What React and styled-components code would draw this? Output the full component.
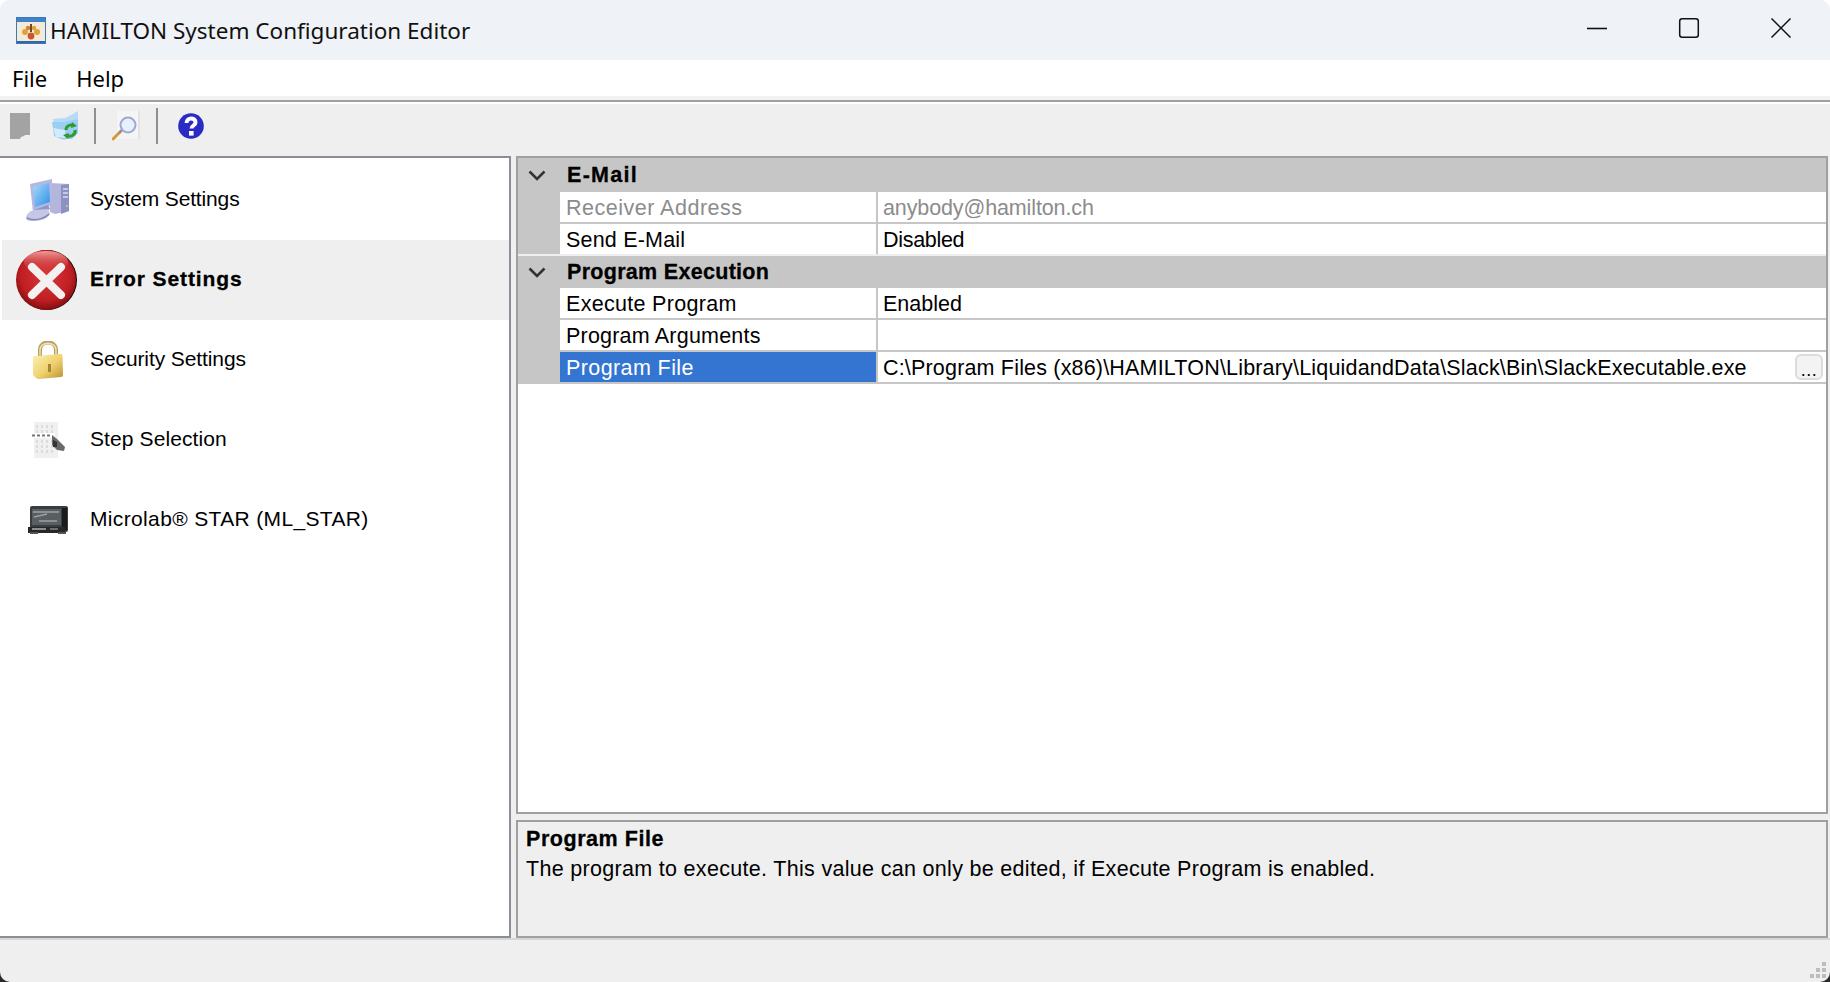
import React from "react";
import styled, { createGlobalStyle } from "styled-components";

const GlobalStyle = createGlobalStyle`
  html, body {
    margin: 0;
    height: 100%;
    overflow: hidden;
    background: linear-gradient(#ffffff 0, #ffffff 50%, #2a2a2a 50%, #2a2a2a 100%);
  }
  #root { height: 100%; }
`;

const Window = styled.div`
  width: 1830px;
  height: 982px;
  display: flex;
  flex-direction: column;
  background: #efefef;
  border-radius: 10px;
  overflow: hidden;
  font-family: "Liberation Sans", Arial, sans-serif;
  color: #000;
`;

const TitleBar = styled.div`
  height: 60px;
  flex-shrink: 0;
  display: flex;
  align-items: center;
  background: #eff3f8;
  padding: 0 3px 0 16px;
  font-family: "Noto Sans", sans-serif;
  font-size: 22.5px;
  color: #111;
`;

const TitleText = styled.span`
  margin-left: 4px;
  flex: 1;
`;

const WinButton = styled.div`
  width: 92px;
  height: 56px;
  padding-bottom: 4px;
  display: flex;
  align-items: center;
  justify-content: center;
`;

const MenuBar = styled.div`
  height: 36px;
  flex-shrink: 0;
  display: flex;
  align-items: center;
  gap: 29px;
  padding-left: 12px;
  background: #fff;
  font-family: "Noto Sans", sans-serif;
  font-size: 22px;
`;

const MenuRule = styled.div`
  height: 2px;
  flex-shrink: 0;
  margin-top: 4px;
  background: #a0a0a0;
  box-shadow: 0 -4px 0 #f2f2f2;
  border-bottom: 2px solid #fff;
  box-sizing: content-box;
`;

const Toolbar = styled.div`
  height: 44px;
  padding-bottom: 8px;
  flex-shrink: 0;
  display: flex;
  align-items: center;
`;

const ToolSlot = styled.div`
  width: ${(p) => p.$w}px;
  height: 100%;
  display: flex;
  align-items: center;
  justify-content: center;
`;

const ToolSep = styled.div`
  width: 2px;
  height: 36px;
  background: #8f8f8f;
  margin-left: ${(p) => p.$gap || 0}px;
`;

const Main = styled.div`
  flex: 1;
  min-height: 0;
  display: flex;
  gap: 5px;
  padding-right: 2px;
`;

const SidePanel = styled.div`
  width: 511px;
  box-sizing: border-box;
  flex-shrink: 0;
  background: #fff;
  border-top: 2px solid #8a8f96;
  border-right: 2px solid #8a8f96;
  border-bottom: 2px solid #8a8f96;
  padding: 2px 0 0 2px;
`;

const NavItem = styled.div`
  height: 80px;
  display: flex;
  align-items: center;
  background: ${(p) => (p.$active ? "#efefef" : "transparent")};
  font-size: 21px;
  font-weight: ${(p) => (p.$active ? 700 : 400)};
  letter-spacing: ${(p) => p.$track}px;
  -webkit-text-stroke: ${(p) => (p.$active ? "0.3px #000" : "0")};
`;

const NavLabel = styled.span`
  margin-top: -2px;
`;

const NavIcon = styled.div`
  width: 84px;
  margin-left: ${(p) => (p.$shift ? 3 : 4)}px;
  margin-right: ${(p) => (p.$shift ? 1 : 0)}px;
  height: 100%;
  display: flex;
  align-items: center;
  justify-content: center;
`;

const RightColumn = styled.div`
  flex: 1;
  min-width: 0;
  display: flex;
  flex-direction: column;
  gap: 6px;
`;

const Grid = styled.div`
  flex: 1;
  min-height: 0;
  background: #fff;
  border: 2px solid #a0a0a0;
  font-size: 21.5px;
`;

const GroupHeader = styled.div`
  height: ${(p) => p.$h}px;
  display: flex;
  align-items: center;
  background: #c6c6c6;
  font-weight: 700;
  -webkit-text-stroke: 0.3px #000;
  border-top: ${(p) => (p.$sep ? "2px solid #efefef" : "none")};
  box-sizing: content-box;
`;

const Chevron = styled.div`
  width: 42px;
  display: flex;
  justify-content: center;
  padding-right: 5px;
  box-sizing: border-box;
`;

const GroupName = styled.span`
  margin-left: 7px;
  letter-spacing: ${(p) => p.$track}px;
`;

const Row = styled.div`
  height: 30px;
  display: flex;
  background: #c6c6c6;
  padding-bottom: ${(p) => (p.$last ? 0 : 2)}px;
  box-sizing: content-box;
`;

const Gutter = styled.div`
  width: 42px;
  flex-shrink: 0;
`;

const NameCell = styled.div`
  width: 316px;
  flex-shrink: 0;
  display: flex;
  align-items: center;
  padding: 2px 0 0 6px;
  box-sizing: border-box;
  letter-spacing: ${(p) => p.$track}px;
  background: ${(p) => (p.$selected ? "#3375d0" : "#fff")};
  color: ${(p) => (p.$selected ? "#fff" : p.$disabled ? "#8c8c8c" : "#000")};
`;

const ValueCell = styled.div`
  flex: 1;
  min-width: 0;
  margin-left: 2px;
  display: flex;
  align-items: center;
  padding: 2px 0 0 5px;
  box-sizing: border-box;
  background: #fff;
  white-space: nowrap;
  letter-spacing: ${(p) => p.$track || 0}px;
  color: ${(p) => (p.$disabled ? "#8c8c8c" : "#000")};
`;

const EllipsisButton = styled.div`
  width: 28px;
  height: 26px;
  margin: -2px 3px 0 auto;
  box-sizing: border-box;
  border: 2px solid #dcdcdc;
  border-radius: 6px;
  background: #f3f3f3;
  font-size: 18px;
  line-height: 28px;
  text-align: center;
  letter-spacing: 0.5px;
`;

const HelpPanel = styled.div`
  height: 118px;
  flex-shrink: 0;
  box-sizing: border-box;
  border: 2px solid #a0a0a0;
  padding: 2px 8px;
  font-size: 21.5px;
`;

const HelpTitle = styled.div`
  font-weight: 700;
  -webkit-text-stroke: 0.3px #000;
  line-height: 30px;
  letter-spacing: 0.55px;
`;

const HelpText = styled.div`
  line-height: 30px;
  letter-spacing: 0.31px;
`;

const StatusBar = styled.div`
  height: 38px;
  flex-shrink: 0;
  border-top: 2px solid #d6d6d6;
  display: flex;
  justify-content: flex-end;
  align-items: flex-end;
  padding: 0 4px 4px 0;
`;

const AppIcon = () => (
  <svg width="30" height="27" viewBox="0 0 30 27">
    <rect x="0.5" y="0.5" width="29" height="26" fill="#f3ead8" stroke="#3f78b8" />
    <rect x="1" y="1" width="28" height="4" fill="#3f82c8" />
    <rect x="1" y="24" width="28" height="2" fill="#2f68a8" />
    <path d="M15 7v8" stroke="#6a4a20" strokeWidth="2" />
    <circle cx="9" cy="15" r="3" fill="#e2a13a" />
    <circle cx="21" cy="15" r="3" fill="#e2a13a" />
    <circle cx="15" cy="19" r="3.4" fill="#c9562c" />
    <circle cx="12" cy="11" r="2.2" fill="#e0782e" />
    <circle cx="18" cy="11" r="2.2" fill="#d9a441" />
  </svg>
);

const Minimize = () => (
  <svg width="22" height="22" viewBox="0 0 22 22">
    <path d="M1 11.500h20" stroke="#111" strokeWidth="1.600" />
  </svg>
);

const Maximize = () => (
  <svg width="22" height="22" viewBox="0 0 22 22">
    <rect x="1.700" y="1.700" width="18.600" height="18.600" rx="2.500" fill="none" stroke="#111" strokeWidth="1.500" />
  </svg>
);

const CloseX = () => (
  <svg width="22" height="22" viewBox="0 0 22 22">
    <path d="M1.500 1.500l19 19M20.500 1.500l-19 19" stroke="#111" strokeWidth="1.500" />
  </svg>
);

const SaveIcon = () => (
  <svg width="20" height="26" viewBox="0 0 20 26">
    <path d="M0 0h20v22l-5 0-1 1-3 1-1 2H0z" fill="#a3a3a3" />
  </svg>
);

const FolderIcon = () => (
  <svg width="28" height="30" viewBox="0 0 28 30">
    <path d="M2 8l12-1 6-3 7-4v20l-4 6-10 3-8-3z" fill="#b5dbf7" />
    <path d="M1 11h12l14-3v14l-6 6H10l-7-3z" fill="#9ccdf2" />
    <path d="M2 17l12 2v8l-9-1z" fill="#d3eafb" />
    <path d="M15 19a5 5 0 0 1 8-4M24 19a5 5 0 0 1-8 5" fill="none" stroke="#2f9a2f" strokeWidth="3" />
    <path d="M21 11l5 4-6 2zM17 28l-5-4 6-2z" fill="#2f9a2f" />
  </svg>
);

const LensIcon = () => (
  <svg width="28" height="30" viewBox="0 0 28 30">
    <rect x="5" y="0" width="23" height="28" fill="#f5f5f5" />
    <rect x="26" y="0" width="2" height="28" fill="#e3e3e3" />
    <path d="M1 28l8-8" stroke="#d39a3a" strokeWidth="3" strokeLinecap="round" />
    <path d="M7 22l3-3" stroke="#8d8d9a" strokeWidth="2" />
    <circle cx="16" cy="14" r="7.500" fill="#e4f2fa" stroke="#a8a4d4" strokeWidth="2" />
  </svg>
);

const HelpIcon = () => (
  <svg width="26" height="26" viewBox="0 0 26 26">
    <circle cx="13" cy="13" r="12.800" fill="#2a2ac4" />
    <path d="M8.500 10c0-6 9-6 9-.500 0 3-4 3-4 6" fill="none" stroke="#fff" strokeWidth="4" />
    <rect x="11" y="18" width="4.600" height="4.600" fill="#fff" />
  </svg>
);

const SystemIcon = () => (
  <svg width="44" height="42" viewBox="0 0 44 42">
    <defs>
      <linearGradient id="scr" x1="0" y1="0" x2="1" y2="1">
        <stop offset="0" stopColor="#a8dcfb" />
        <stop offset="1" stopColor="#2f8fe8" />
      </linearGradient>
    </defs>
    <path d="M24 4l19 1v27l-14 3-5-2z" fill="#b3b5dc" />
    <path d="M35 6l8-1v27l-8 3z" fill="#8d90c2" />
    <path d="M37 10h5M37 14h5M37 18h5" stroke="#d8d9ee" strokeWidth="1.500" />
    <rect x="40" y="26" width="2" height="2" fill="#9fd28f" />
    <path d="M4 5l22-5 1 26-20 7z" fill="#b4b7df" />
    <path d="M7 8l16-4 1 19-15 5z" fill="url(#scr)" />
    <path d="M8 31l14-5 2 4-10 5z" fill="#8f92c4" />
    <path d="M0 39c0-4 4-7 8-8l14-1 2 5c-2 4-8 7-16 7-4 0-8 0-8-3z" fill="#c5c7e4" />
    <path d="M1 39c5 3 16 2 22-4" stroke="#8386ba" strokeWidth="1.500" fill="none" />
  </svg>
);

const ErrorIcon = () => (
  <svg width="62" height="62" viewBox="0 0 62 62">
    <defs>
      <radialGradient id="red" cx="0.5" cy="0.42" r="0.6">
        <stop offset="0" stopColor="#d8383a" />
        <stop offset="0.7" stopColor="#bf1f22" />
        <stop offset="1" stopColor="#7a0c0e" />
      </radialGradient>
      <linearGradient id="shine" x1="0" y1="0" x2="0" y2="1">
        <stop offset="0" stopColor="#f09a9a" />
        <stop offset="1" stopColor="#d23a3a" stopOpacity="0" />
      </linearGradient>
    </defs>
    <circle cx="31" cy="31" r="30" fill="#140404" />
    <circle cx="30" cy="31" r="30" fill="url(#red)" />
    <ellipse cx="30" cy="13" rx="22" ry="11" fill="url(#shine)" />
    <path d="M16 18l29 28M45 18L16 46" stroke="#f4f0f0" strokeWidth="8" strokeLinecap="round" />
  </svg>
);

const LockIcon = () => (
  <svg width="30" height="38" viewBox="0 0 30 38">
    <defs>
      <linearGradient id="gold" x1="0" y1="0" x2="1" y2="1">
        <stop offset="0" stopColor="#fdf2b8" />
        <stop offset="0.55" stopColor="#efd06c" />
        <stop offset="1" stopColor="#bb9033" />
      </linearGradient>
    </defs>
    <path d="M7 16V9c0-10 16-10 16 0v7" fill="none" stroke="#b9a05c" strokeWidth="4" />
    <path d="M7 14V9c0-9 16-9 16 0v5" fill="none" stroke="#efe3b4" strokeWidth="1.500" />
    <path d="M1 15l27-2q1.500 0 1.500 2l.5 19q0 2-2 2L6 38q-2 0-3-1l-2-2q-1-1-1-2V17q0-2 1-2z" fill="url(#gold)" />
    <rect x="15" y="23" width="3" height="8" fill="#a58536" />
  </svg>
);

const StepIcon = () => (
  <svg width="34" height="36" viewBox="0 0 34 36">
    <rect x="3" y="0" width="24" height="36" fill="#f0f0f0" />
    <path d="M6 3v30M11 3v30M16 3v30M21 3v30" stroke="#dcdcdc" strokeWidth="2" strokeDasharray="3 2" />
    <rect x="0" y="11" width="24" height="5" fill="#fff" />
    <path d="M1 13.500h20" stroke="#777" strokeWidth="2" strokeDasharray="3 2" />
    <path d="M21 13l5 4 8 8-1 4-7-1-5-5z" fill="#6a6a6a" />
    <path d="M22 18l4 2v5h-4z" fill="#333" />
  </svg>
);

const StarIcon = () => (
  <svg width="40" height="28" viewBox="0 0 40 28">
    <rect x="2" y="0" width="38" height="26" rx="2" fill="#3a3d40" />
    <rect x="4" y="3" width="29" height="16" fill="#595e62" />
    <path d="M5 6h26M6 11l13-3M11 15h18" stroke="#9ba1a4" strokeWidth="1.500" />
    <rect x="34" y="2" width="5" height="22" fill="#1a1b1d" />
    <rect x="0" y="21" width="37" height="6" fill="#26282a" />
    <rect x="4" y="22" width="14" height="2" fill="#8a8d90" />
    <rect x="22" y="22" width="8" height="2" fill="#6b6e70" />
    <rect x="2" y="26" width="8" height="2" fill="#555" />
    <rect x="30" y="26" width="8" height="2" fill="#555" />
  </svg>
);

const GroupChevron = () => (
  <svg width="18" height="11" viewBox="0 0 18 11">
    <path d="M1.500 1.500L9 9l7.500-7.500" fill="none" stroke="#333" strokeWidth="2.600" />
  </svg>
);

const Grip = () => (
  <svg width="16" height="16" viewBox="0 0 16 16" fill="#bdbdbd">
    <rect x="12" y="0" width="4" height="4" />
    <rect x="6" y="6" width="4" height="4" />
    <rect x="12" y="6" width="4" height="4" />
    <rect x="0" y="12" width="4" height="4" />
    <rect x="6" y="12" width="4" height="4" />
    <rect x="12" y="12" width="4" height="4" />
  </svg>
);

const navItems = [
  { label: "System Settings", icon: <SystemIcon />, track: -0.15 },
  { label: "Error Settings", icon: <ErrorIcon />, active: true, track: 0.9 },
  { label: "Security Settings", icon: <LockIcon />, track: -0.1 },
  { label: "Step Selection", icon: <StepIcon />, track: 0.1 },
  { label: "Microlab® STAR (ML_STAR)", icon: <StarIcon />, track: 0.35 },
];

export default function App() {
  return (
    <Window>
      <GlobalStyle />
      <TitleBar>
        <AppIcon />
        <TitleText>HAMILTON System Configuration Editor</TitleText>
        <WinButton><Minimize /></WinButton>
        <WinButton><Maximize /></WinButton>
        <WinButton><CloseX /></WinButton>
      </TitleBar>
      <MenuBar>
        <span>File</span>
        <span>Help</span>
      </MenuBar>
      <MenuRule />
      <Toolbar>
        <ToolSlot $w={40}><SaveIcon /></ToolSlot>
        <ToolSlot $w={50}><FolderIcon /></ToolSlot>
        <ToolSep $gap={4} />
        <ToolSlot $w={60}><LensIcon /></ToolSlot>
        <ToolSep />
        <ToolSlot $w={66}><HelpIcon /></ToolSlot>
      </Toolbar>
      <Main>
        <SidePanel>
          {navItems.map((item) => (
            <NavItem key={item.label} $active={item.active} $track={item.track}>
              <NavIcon $shift={item.active}>{item.icon}</NavIcon>
              <NavLabel>{item.label}</NavLabel>
            </NavItem>
          ))}
        </SidePanel>
        <RightColumn>
          <Grid>
            <GroupHeader $h={34}>
              <Chevron><GroupChevron /></Chevron>
              <GroupName $track={1.3}>E-Mail</GroupName>
            </GroupHeader>
            <Row>
              <Gutter />
              <NameCell $disabled $track={0.5}>Receiver Address</NameCell>
              <ValueCell $disabled $track={-0.12}>anybody@hamilton.ch</ValueCell>
            </Row>
            <Row $last>
              <Gutter />
              <NameCell $track={0.2}>Send E-Mail</NameCell>
              <ValueCell $track={-0.3}>Disabled</ValueCell>
            </Row>
            <GroupHeader $h={32} $sep>
              <Chevron><GroupChevron /></Chevron>
              <GroupName $track={0.3}>Program Execution</GroupName>
            </GroupHeader>
            <Row>
              <Gutter />
              <NameCell $track={0.3}>Execute Program</NameCell>
              <ValueCell>Enabled</ValueCell>
            </Row>
            <Row>
              <Gutter />
              <NameCell $track={0.2}>Program Arguments</NameCell>
              <ValueCell />
            </Row>
            <Row>
              <Gutter />
              <NameCell $selected $track={0.4}>Program File</NameCell>
              <ValueCell $track={0.18}>
                C:\Program Files (x86)\HAMILTON\Library\LiquidandData\Slack\Bin\SlackExecutable.exe
                <EllipsisButton>...</EllipsisButton>
              </ValueCell>
            </Row>
          </Grid>
          <HelpPanel>
            <HelpTitle>Program File</HelpTitle>
            <HelpText>The program to execute. This value can only be edited, if Execute Program is enabled.</HelpText>
          </HelpPanel>
        </RightColumn>
      </Main>
      <StatusBar>
        <Grip />
      </StatusBar>
    </Window>
  );
}
